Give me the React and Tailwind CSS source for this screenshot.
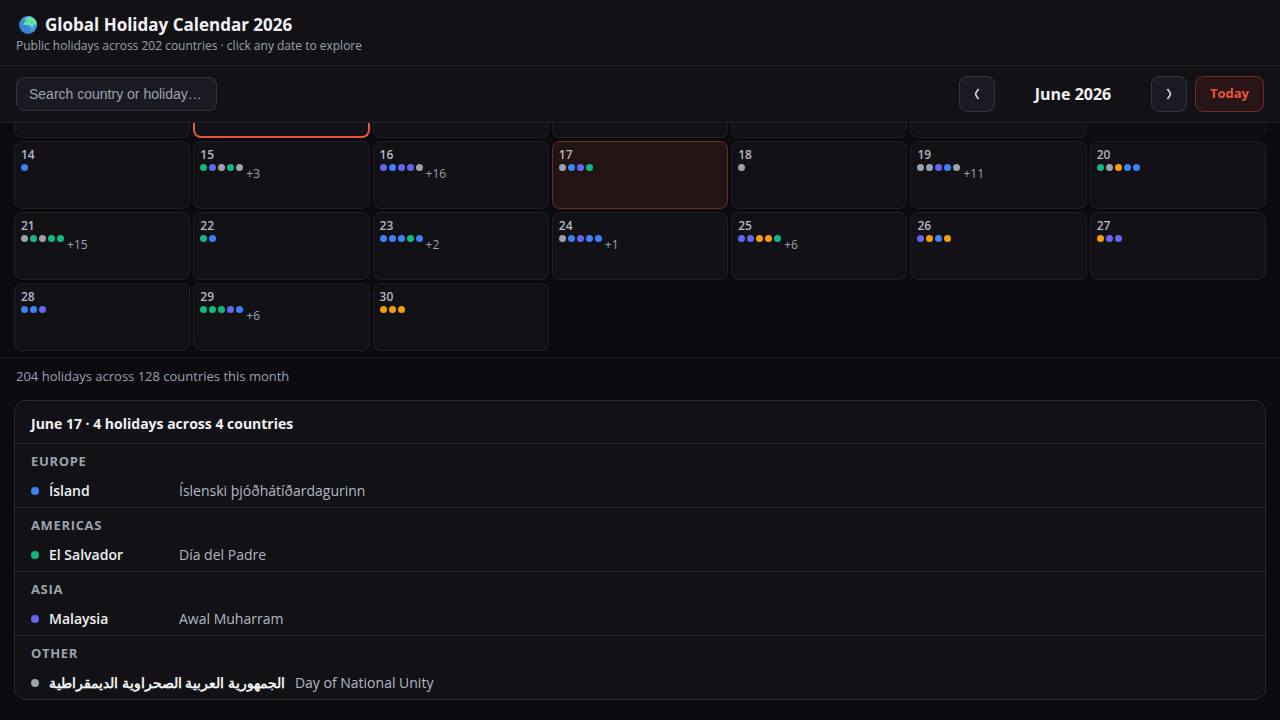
import React, { useState } from 'react';
import clsx from 'clsx';

const DOT_COLORS = {
    b: 'bg-[#3b82f6]',
    p: 'bg-[#6366f1]',
    g: 'bg-[#10b981]',
    o: 'bg-[#f59e0b]',
    n: 'bg-[#9ca3af]'
};

// One letter per dot, see DOT_COLORS
const days = [
    { date: 14, dots: 'b' },
    { date: 15, dots: 'gpngn', more: 3 },
    { date: 16, dots: 'pbppn', more: 16 },
    { date: 17, dots: 'nbpg' },
    { date: 18, dots: 'n' },
    { date: 19, dots: 'nnpbn', more: 11 },
    { date: 20, dots: 'gnobb' },
    { date: 21, dots: 'ngngg', more: 15 },
    { date: 22, dots: 'gb' },
    { date: 23, dots: 'bbbgb', more: 2 },
    { date: 24, dots: 'nbpbb', more: 1 },
    { date: 25, dots: 'ppoog', more: 6 },
    { date: 26, dots: 'pobo' },
    { date: 27, dots: 'opp' },
    { date: 28, dots: 'bbp' },
    { date: 29, dots: 'gggpb', more: 6 },
    { date: 30, dots: 'ooo' }
];

const regions = [
    { name: 'EUROPE', dot: 'b', country: 'Ísland', holiday: 'Íslenski þjóðhátíðardagurinn' },
    { name: 'AMERICAS', dot: 'g', country: 'El Salvador', holiday: 'Día del Padre' },
    { name: 'ASIA', dot: 'p', country: 'Malaysia', holiday: 'Awal Muharram' },
    { name: 'OTHER', dot: 'n', country: 'الجمهورية العربية الصحراوية الديمقراطية', holiday: 'Day of National Unity' }
];

const Globe = () => (
    <svg viewBox="0 0 18 18" className="w-[18px] h-[18px]" aria-hidden="true">
        <defs>
            <linearGradient id="sea" x1="0" y1="1" x2="1" y2="0">
                <stop offset="0" stopColor="#3564cf" />
                <stop offset="1" stopColor="#45b8f5" />
            </linearGradient>
            <clipPath id="disc"><circle cx="9" cy="9" r="9" /></clipPath>
        </defs>
        <g clipPath="url(#disc)">
            <rect width="18" height="18" fill="url(#sea)" />
            <path d="M6 3 8 1.5 11 0H15L18 5 17.5 9 16 8 14.5 9 13.5 12 12 11 11 9.5 9.5 9 8 9.5 7 8.5 5.5 9 5 7 6 5.5Z" fill="#62e5a5" />
            <path d="M2.5 6.5 4 8 4.5 10.5 3 10ZM4 12 6 13 5.5 15 4 14ZM11 13.5 14 13 14.5 14.5 12 15.5Z" fill="#3aae94" />
            <path d="M7 4 9 4.5 8 6 6 6ZM12.5 5.5 14 6.5 12.5 7.5Z" fill="#43bdb4" />
        </g>
    </svg>
);

const Chevron = ({ d }) => (
    <svg viewBox="0 0 6 12" className="w-1.5 h-3" fill="none" stroke="#d0d3da" strokeWidth="1.8" aria-hidden="true">
        <path d={d} />
    </svg>
);

const DayCell = ({ day, selected, onSelect }) => (
    <button
        type="button"
        onClick={() => onSelect(day.date)}
        className={clsx(
            'h-[68px] rounded-lg border px-1.5 pt-1 flex flex-col items-start text-left',
            selected ? 'bg-[#221314] border-[#6f2c22]' : 'bg-[#111116] border-[#1f1f25]'
        )}
    >
        <span className="text-xs leading-[18px] font-semibold text-[#b4b8c2]">{day.date}</span>
        <span className="flex items-start gap-0.5">
            {day.dots.split('').map((dot, i) => (
                <span key={i} className={clsx('w-[7px] h-[7px] rounded-full', DOT_COLORS[dot])}></span>
            ))}
            {day.more && <span className="pl-px text-xs leading-5 text-[#9ca3af]">+{day.more}</span>}
        </span>
    </button>
);

const App = () => {
    const [search, setSearch] = useState('');
    const [selected, setSelected] = useState(17);

    return (
        <div className="min-h-screen bg-[#0a0a0f] text-[#f1f1f4] font-['Open_Sans','Noto_Sans',sans-serif]">
            <header className="h-[66px] px-4 pt-3 bg-[#111116] border-b border-[#222228]">
                <h1 className="flex items-center gap-2 pl-[3px] text-[17px] leading-[25px] font-bold">
                    <Globe />
                    Global Holiday Calendar 2026
                </h1>
                <p className="text-xs leading-[18px] text-[#9ca3af]">Public holidays across 202 countries · click any date to explore</p>
            </header>

            {/* Toolbar */}
            <div className="h-[57px] px-4 flex items-center justify-between bg-[#111116] border-b border-[#222228]">
                <input
                    type="text"
                    aria-label="Search country or holiday"
                    placeholder="Search country or holiday…"
                    value={search}
                    onChange={(e) => setSearch(e.target.value)}
                    className="w-[201px] h-[34px] px-3 rounded-lg border border-[#34343c] bg-[#1a1a23] font-['Liberation_Sans',sans-serif] text-sm placeholder:text-[#9ca3af] outline-none"
                />
                <div className="flex items-center gap-2">
                    <button type="button" aria-label="Previous month" className="w-9 h-9 flex items-center justify-center rounded-lg border border-[#34343c] bg-[#1a1a23]">
                        <Chevron d="M4.6 1C3.4 2.8 1.6 4.2 1.6 6S3.4 9.2 4.6 11" />
                    </button>
                    <h2 className="w-[140px] text-center text-base font-bold">June 2026</h2>
                    <button type="button" aria-label="Next month" className="w-9 h-9 flex items-center justify-center rounded-lg border border-[#34343c] bg-[#1a1a23]">
                        <Chevron d="M1.4 1C2.6 2.8 4.4 4.2 4.4 6S2.6 9.2 1.4 11" />
                    </button>
                    <button type="button" onClick={() => setSelected(17)} className="w-[69px] h-9 rounded-lg border border-[#6f2c22] bg-[#271517] text-[13px] font-bold text-[#e9553a]">Today</button>
                </div>
            </div>

            {/* Tail of the previous week, scrolled under the toolbar */}
            <div className="px-3.5 grid grid-cols-7 gap-[3px]">
                {[7, 8, 9, 10, 11, 12, 13].map(date => (
                    <div
                        key={date}
                        className={clsx(
                            'h-[15px] rounded-b-lg',
                            date === 8 && 'bg-[#111116] border-2 border-t-0 border-[#e9553a]',
                            date === 13 && 'bg-[#0d0d12] border border-t-0 border-[#131318]',
                            date !== 8 && date !== 13 && 'bg-[#111116] border border-t-0 border-[#1f1f25]'
                        )}
                    ></div>
                ))}
            </div>

            <div className="px-3.5 pt-[3px] pb-1.5 grid grid-cols-7 gap-[3px]">
                {days.map(day => (
                    <DayCell key={day.date} day={day} selected={day.date === selected} onSelect={setSelected} />
                ))}
            </div>

            <p className="px-4 pt-2 pb-3.5 border-t border-[#1a1a20] text-[13px] leading-5 text-[#9ca3af]">
                204 holidays across 128 countries this month
            </p>

            <section className="mx-3.5 rounded-xl border border-[#2b2b32] bg-[#111116]">
                <h3 className="px-4 pt-3 pb-2 leading-[22px] border-b border-[#222228] text-sm font-bold">
                    June 17 · 4 holidays across 4 countries
                </h3>
                {regions.map(region => (
                    <div key={region.name} className="px-4 pt-[7px] pb-1.5 border-b border-[#222228] last:border-b-0">
                        <h4 className="text-[13px] leading-5 font-bold tracking-wider text-[#9ca3af]">{region.name}</h4>
                        <div className="mt-2.5 flex items-center gap-2.5 text-sm leading-5">
                            <span className="flex items-center gap-2.5 min-w-[138px]">
                                <span className={clsx('w-2 h-2 rounded-full', DOT_COLORS[region.dot])}></span>
                                <span className="font-semibold">{region.country}</span>
                            </span>
                            <span className="text-[#b4b8c2]">{region.holiday}</span>
                        </div>
                    </div>
                ))}
            </section>
        </div>
    );
};

export default App;
